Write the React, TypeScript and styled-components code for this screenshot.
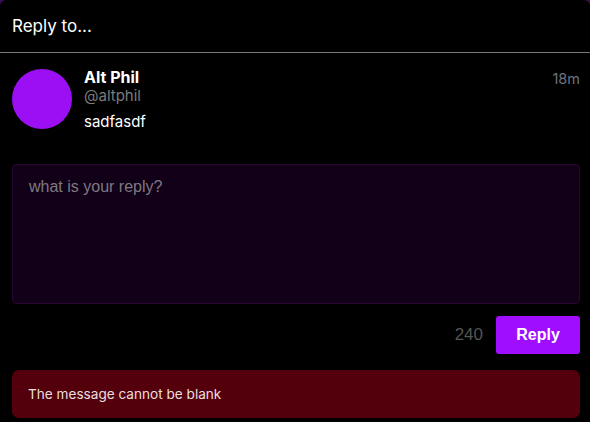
import React, { useState } from "react";
import styled, { createGlobalStyle } from "styled-components";

const GlobalStyle = createGlobalStyle`
  html, body {
    margin: 0;
    padding: 0;
    background: #3a0d55;
  }
  body {
    font-family: Inter, "Noto Sans", sans-serif;
  }
`;

const Modal = styled.div`
  width: 590px;
  height: 422px;
  background: #000;
  border-radius: 6px 6px 0 0;
  overflow: hidden;
  color: #fff;
  display: flex;
  flex-direction: column;
`;

const Header = styled.div`
  height: 52px;
  display: flex;
  align-items: center;
  padding: 0 12px;
  font-size: 17px;
  border-bottom: 1px solid #7a7a7a;
`;

const Body = styled.div`
  padding: 14px 10px 0 12px;
  display: flex;
  flex-direction: column;
`;

const Post = styled.div`
  display: flex;
  gap: 12px;
  align-items: flex-start;
`;

const Avatar = styled.div`
  width: 60px;
  height: 60px;
  border-radius: 50%;
  background: #9c0ff4;
  flex-shrink: 0;
  margin-top: 2px;
`;

const PostMain = styled.div`
  flex: 1;
  display: flex;
  flex-direction: column;
`;

const PostTop = styled.div`
  display: flex;
  justify-content: space-between;
  align-items: flex-start;
`;

const Name = styled.div`
  font-weight: 700;
  font-size: 16px;
  line-height: 20px;
`;

const Handle = styled.div`
  color: #7b7b7b;
  font-size: 15px;
  line-height: 18px;
`;

const Time = styled.div`
  color: #6f7380;
  font-size: 14.5px;
  margin-top: 3px;
`;

const Text = styled.div`
  font-size: 15px;
  margin-top: 7px;
`;

const ReplyInput = styled.textarea`
  margin-top: 33px;
  height: 140px;
  box-sizing: border-box;
  width: 568px;
  resize: none;
  background: #110018;
  border: 1px solid #25072f;
  border-radius: 4px;
  padding: 13px 16px;
  color: #fff;
  font-family: "Liberation Sans", Arial, sans-serif;
  font-size: 16px;
  outline: none;
  &::placeholder {
    color: #7e7a82;
  }
`;

const Actions = styled.div`
  width: 568px;
  margin-top: 12px;
  display: flex;
  justify-content: flex-end;
  align-items: center;
  gap: 13px;
`;

const Count = styled.span`
  color: #555;
  font-family: "Liberation Sans", Arial, sans-serif;
  font-size: 17px;
`;

const ReplyButton = styled.button`
  width: 84px;
  height: 38px;
  border: none;
  border-radius: 3px;
  background: #a00eff;
  color: #fff;
  font-family: "Liberation Sans", Arial, sans-serif;
  font-weight: 700;
  font-size: 16px;
  cursor: pointer;
`;

const ErrorBox = styled.div`
  margin-top: 16px;
  width: 568px;
  height: 48px;
  box-sizing: border-box;
  background: #54000c;
  border-radius: 7px;
  display: flex;
  align-items: center;
  padding: 0 16px;
  font-size: 13.6px;
  color: #eadfe0;
`;

export default function App() {
  const [reply, setReply] = useState("");

  return (
    <>
      <GlobalStyle />
      <Modal>
        <Header>Reply to...</Header>
        <Body>
          <Post>
            <Avatar />
            <PostMain>
              <PostTop>
                <div>
                  <Name>Alt Phil</Name>
                  <Handle>@altphil</Handle>
                </div>
                <Time>18m</Time>
              </PostTop>
              <Text>sadfasdf</Text>
            </PostMain>
          </Post>
          <ReplyInput
            placeholder="what is your reply?"
            value={reply}
            onChange={e => setReply(e.target.value)}
          />
          <Actions>
            <Count>{240 - reply.length}</Count>
            <ReplyButton>Reply</ReplyButton>
          </Actions>
          <ErrorBox>The message cannot be blank</ErrorBox>
        </Body>
      </Modal>
    </>
  );
}
